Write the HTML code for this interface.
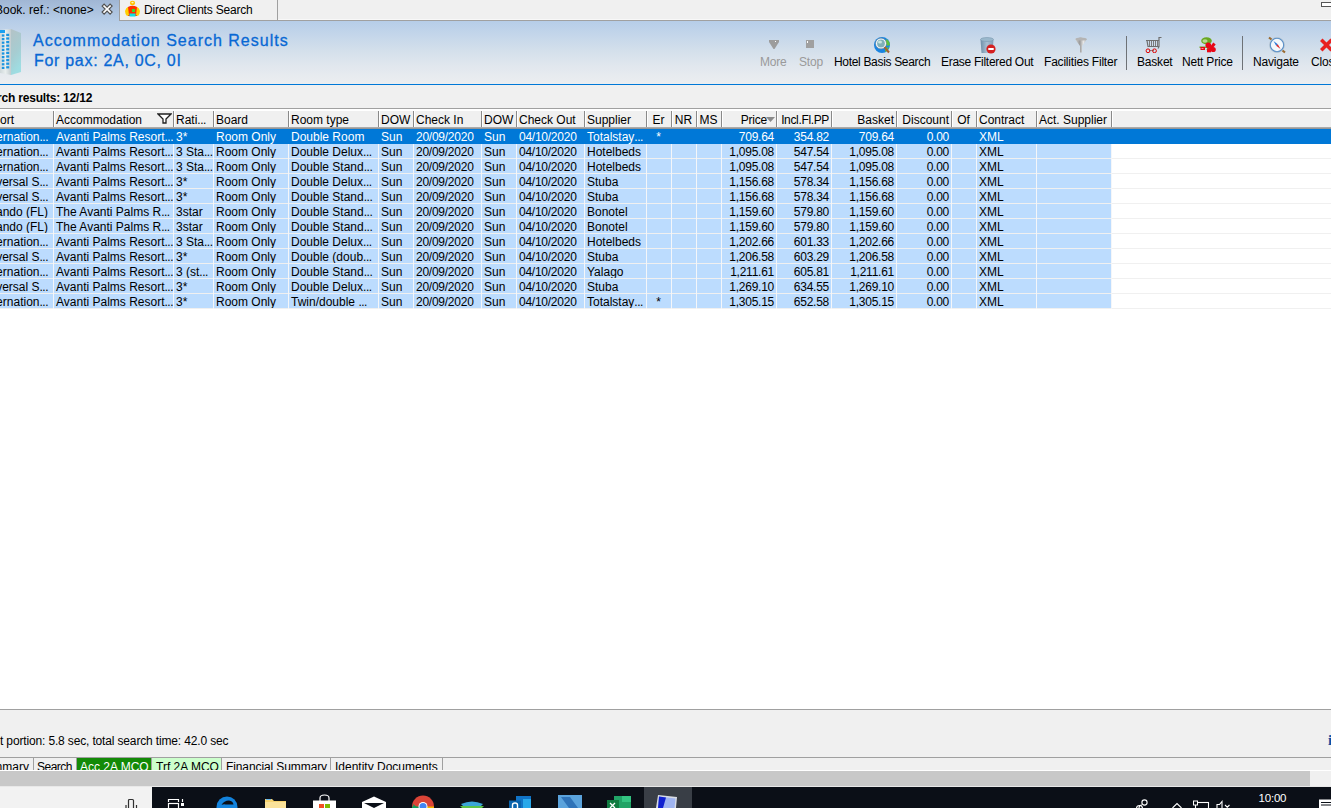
<!DOCTYPE html>
<html><head><meta charset="utf-8">
<style>
*{margin:0;padding:0;box-sizing:border-box}
html,body{width:1331px;height:808px;overflow:hidden;background:#fff}
body{position:relative;font-family:"Liberation Sans",sans-serif;font-size:12px;letter-spacing:-0.2px;color:#000}
.a{position:absolute}
#topbg{position:absolute;left:0;top:0;width:1331px;height:84px;background:linear-gradient(to bottom,#a0b6d4 0px,#b6cde8 21px,#c4d6ea 35px,#d3dfeb 50px,#e1e7ee 66px,#eceef0 84px)}
#tabstrip{position:absolute;left:277px;top:0;width:1054px;height:21px;background:#f0f0f0;border-bottom:1px solid #a0a0a0;border-left:1px solid #a0a0a0}
#tab2{position:absolute;left:119px;top:-1px;width:159px;height:22px;background:#f0f0f0;border:1px solid #a0a0a0}
.t12{position:absolute;white-space:nowrap;font-size:12px;line-height:15px}
#title{position:absolute;left:33px;top:31px;font-size:16px;line-height:19px;letter-spacing:1px;color:#0868d4;-webkit-text-stroke:0.3px #0868d4;white-space:nowrap}
#sub{position:absolute;left:34px;top:51px;font-size:16px;line-height:19px;letter-spacing:0.7px;color:#0868d4;-webkit-text-stroke:0.3px #0868d4;white-space:nowrap}
#blueline{position:absolute;left:0;top:84px;width:1331px;height:1px;background:#0078d7}
#summary{position:absolute;left:0;top:85px;width:1331px;height:23px;background:#f0f0f0}
#gridtop{position:absolute;left:0;top:108px;width:1331px;height:1px;background:#a0a0a0}
#hdr{position:absolute;left:0;top:109px;width:1331px;height:20px;background:#f0f0f0;border-top:2px solid #fff}
#hdrbot{position:absolute;left:0;top:127px;width:1331px;height:2px;background:linear-gradient(#b4b4b4,#8c8c8c)}
.hc{position:absolute;top:0;height:18px}
.hc > span{position:absolute;top:2px;white-space:nowrap;line-height:15px;letter-spacing:0}
.hc > span.l{left:3px}
.hc > span.l0{left:0px}
.hc > span.r{right:2px}
.hc > span.rp{right:9px;letter-spacing:-0.2px}
.hc > span.r3{right:2px;letter-spacing:-0.35px}
.hc > span.c{left:0;right:0;text-align:center}
.hsep{position:absolute;top:0px;width:2px;height:17px;background:linear-gradient(to right,#8a8a8a 50%,#fff 50%)}
.row{position:absolute;left:0;height:15px;width:1111px;background:#bcdcfe}
.row.sel{width:1331px;background:#0078d7;color:#fff}
.cell{position:absolute;top:1px;height:15px;line-height:15px;white-space:nowrap;overflow:hidden;letter-spacing:0}
.cell.num{letter-spacing:-0.25px}
.el{letter-spacing:-0.5px}
.cell.al{text-align:left;padding-left:3px}
.cell.ar{text-align:right;padding-right:2px}
.cell.ac{text-align:center}
.hl{position:absolute;left:0;width:1331px;height:1px;background:#f0f0f0}
.vl{position:absolute;top:0;width:1px;height:165px;background:#f4f6f9}
#status{position:absolute;left:0;top:709px;width:1331px;height:49px;background:#f0f0f0;border-top:1px solid #a0a0a0;border-bottom:1px solid #a0a0a0}
#btabs{position:absolute;left:0;top:758px;width:1331px;height:12px;background:#f0f0f0;overflow:hidden}
.bt{position:absolute;top:0;height:20px;letter-spacing:0;border-right:1px solid #a0a0a0;white-space:nowrap;line-height:15px;padding-top:2px;overflow:hidden}
#hbar{position:absolute;left:0;top:770px;width:1331px;height:17px;background:#f0f0f0;border-top:1px solid #fff}
#hthumb{position:absolute;left:0;top:771px;width:1310px;height:15px;background:#c8c8c8}
#hbot{position:absolute;left:0;top:786px;width:1331px;height:1px;background:#e8e8e8}
#search{position:absolute;left:0;top:787px;width:152px;height:21px;background:#f2f2f2}
#taskbar{position:absolute;left:152px;top:787px;width:1179px;height:21px;background:#0b0f17}
.tbsep{position:absolute;top:36px;width:1px;height:34px;background:#6e7276}
.tl{position:absolute;white-space:nowrap;line-height:15px;text-align:center}
.dis{color:#9a9a9a}
</style></head><body>
<div id="topbg"></div>
<div id="tabstrip"></div>
<div id="tab2"></div>
<div class="a" style="left:278px;top:19px;width:1053px;height:1px;background:#f8f8f8"></div>
<!-- active tab text -->
<div class="t12" style="left:-5px;top:3px;letter-spacing:0">Book. ref.: &lt;none&gt;</div>
<svg class="a" style="left:101px;top:3px" width="12" height="12" viewBox="-0.6 -0.6 12 12">
 <path d="M0.5 2.5 L2.5 0.5 L5.5 3.5 L8.5 0.5 L10.5 2.5 L7.5 5.5 L10.5 8.5 L8.5 10.5 L5.5 7.5 L2.5 10.5 L0.5 8.5 L3.5 5.5Z" fill="#fff" stroke="#505050" stroke-width="1.2" stroke-linejoin="miter"/>
</svg>
<!-- jockey icon -->
<svg class="a" style="left:124px;top:0px" width="17" height="18" viewBox="0 0 17 18">
 <ellipse cx="8.5" cy="3" rx="2.6" ry="2.2" fill="#ffc000"/>
 <ellipse cx="8.5" cy="2.6" rx="1.2" ry="0.8" fill="#fff3c0"/>
 <path d="M4 7 Q8.5 4.5 13 7 L14 11 L13 16 L4 16 L3 11Z" fill="#ff3000"/>
 <path d="M1 11 Q2 7.5 4 7 L5 15 L3 16 Q1 14 1 11Z" fill="#ffd000"/>
 <path d="M16 11 Q15 7.5 13 7 L12 15 L14 16 Q16 14 16 11Z" fill="#ffd000"/>
 <rect x="8" y="9" width="3" height="3" fill="#30e030"/>
 <rect x="5.5" y="13.5" width="6" height="3" fill="#10e0e0"/>
</svg>
<div class="t12" style="left:144px;top:3px">Direct Clients Search</div>
<!-- minimize -->
<div class="a" style="left:1321px;top:2px;width:14px;height:5px;border:1.3px solid #555;background:#fff"></div>

<!-- building icon -->
<svg class="a" style="left:0px;top:28px" width="22" height="48" viewBox="0 0 22 48">
 <defs><linearGradient id="bg1" x1="0" x2="1"><stop offset="0" stop-color="#cfd8da"/><stop offset="0.5" stop-color="#e8eeee"/><stop offset="1" stop-color="#c2cccf"/></linearGradient>
 <linearGradient id="bg2" x1="0" y1="0" x2="0.3" y2="1"><stop offset="0" stop-color="#b4c2c6"/><stop offset="0.6" stop-color="#a6cdd2"/><stop offset="1" stop-color="#9edde2"/></linearGradient></defs>
 <path d="M0 2 L11 1 L11 47 L0 45Z" fill="url(#bg1)"/>
 <path d="M11 1 L21 5 L21 44 L11 47Z" fill="url(#bg2)"/>
 <rect x="0" y="2" width="5" height="3" fill="#1aa0f0"/>
 <g fill="#1a94e0"><rect x="1.8" y="6.4" width="2.6" height="2.2"/><rect x="6.2" y="5.8" width="3" height="2.2"/><rect x="1.8" y="10.0" width="2.6" height="2.2"/><rect x="6.2" y="9.4" width="3" height="2.2"/><rect x="1.8" y="13.6" width="2.6" height="2.2"/><rect x="6.2" y="13.0" width="3" height="2.2"/><rect x="1.8" y="17.2" width="2.6" height="2.2"/><rect x="6.2" y="16.6" width="3" height="2.2"/><rect x="1.8" y="20.8" width="2.6" height="2.2"/><rect x="6.2" y="20.2" width="3" height="2.2"/><rect x="1.8" y="24.4" width="2.6" height="2.2"/><rect x="6.2" y="23.8" width="3" height="2.2"/><rect x="1.8" y="28.0" width="2.6" height="2.2"/><rect x="6.2" y="27.4" width="3" height="2.2"/><rect x="1.8" y="31.6" width="2.6" height="2.2"/><rect x="6.2" y="31.0" width="3" height="2.2"/><rect x="1.8" y="35.2" width="2.6" height="2.2"/><rect x="6.2" y="34.6" width="3" height="2.2"/><rect x="1.8" y="38.8" width="2.6" height="2.2"/><rect x="6.2" y="38.2" width="3" height="2.2"/></g>
</svg>
<div id="title">Accommodation Search Results</div>
<div id="sub">For pax: 2A, 0C, 0I</div>

<!-- toolbar -->
<svg class="a" style="left:769px;top:40px" width="10" height="9" viewBox="0 0 10 9"><path d="M0 0 H10 V2 L5.5 9 H4.5 L0 2Z" fill="#9c9c9c"/><rect x="6" y="1" width="1" height="1" fill="#fff"/></svg>
<div class="t12 dis" style="left:760px;top:55px">More</div>
<div class="a" style="left:806px;top:40px;width:8px;height:8px;background:#a0a0a0"></div><div class="a" style="left:807px;top:41px;width:1px;height:2px;background:#fff"></div>
<div class="t12 dis" style="left:799px;top:55px">Stop</div>
<svg class="a" style="left:873px;top:36px" width="19" height="18" viewBox="0 0 19 18">
 <circle cx="9" cy="9" r="8" fill="#1a84e0"/>
 <path d="M13 3 Q17 5 17 9 L14 10 Q12 7 13 3Z" fill="#5cc040"/>
 <path d="M12 12 L16 11 Q15 15 12 16Z" fill="#5cc040"/>
 <circle cx="8" cy="7.5" r="4.6" fill="#7fb0b8" stroke="#fff" stroke-width="1.4"/>
 <ellipse cx="7" cy="6" rx="2" ry="1.6" fill="#c8e4e0"/>
 <circle cx="8" cy="7.5" r="5.4" fill="none" stroke="#7c8a90" stroke-width="0.6"/>
 <path d="M11.5 11 L16 16.5" stroke="#a86430" stroke-width="2"/>
</svg>
<div class="t12" style="left:834px;top:55px;letter-spacing:-0.32px">Hotel Basis Search</div>
<svg class="a" style="left:979px;top:37px" width="17" height="17" viewBox="0 0 17 17">
 <defs><linearGradient id="tc" x1="0" x2="1"><stop offset="0" stop-color="#6f8fa8"/><stop offset="0.5" stop-color="#a8c0d4"/><stop offset="1" stop-color="#7f9db6"/></linearGradient></defs>
 <path d="M1.5 2.5 L14.5 2.5 L13.5 16 L2.5 16Z" fill="url(#tc)"/>
 <ellipse cx="8" cy="2.5" rx="6.5" ry="2" fill="#9ab8cc" stroke="#7a98b0" stroke-width="0.6"/>
 <circle cx="12" cy="12" r="4.6" fill="#d42020"/>
 <rect x="9.3" y="11" width="5.4" height="2" fill="#fff"/>
</svg>
<div class="t12" style="left:941px;top:55px;letter-spacing:-0.28px">Erase Filtered Out</div>
<svg class="a" style="left:1074px;top:36px" width="14" height="17" viewBox="0 0 14 17">
 <defs><linearGradient id="fn" x1="0" x2="1"><stop offset="0" stop-color="#d8d8d8"/><stop offset="0.4" stop-color="#9a9a9a"/><stop offset="0.7" stop-color="#e8e8e8"/><stop offset="1" stop-color="#a8a8a8"/></linearGradient></defs>
 <path d="M1 3 Q7 0 13 3 L8 10 V16.5 H6 V10Z" fill="url(#fn)"/>
 <ellipse cx="7" cy="3" rx="5.5" ry="1.6" fill="#b4b4b4"/>
</svg>
<div class="t12" style="left:1044px;top:55px">Facilities Filter</div>
<div class="tbsep" style="left:1126px"></div>
<svg class="a" style="left:1145px;top:36px" width="17" height="17" viewBox="0 0 17 17">
 <path d="M1 4.5 H14 M2 4.5 L3 10.5 H14 V1.5 H16.5 M14 10.5 L13 12.5" fill="none" stroke="#6e6e6e" stroke-width="1.2"/>
 <path d="M4.5 5 V10 M6.5 5 V10 M8.5 5 V10 M10.5 5 V10 M12.5 5 V10" stroke="#7a7a7a" stroke-width="1"/>
 <path d="M4 14.5 H9" stroke="#6e6e6e" stroke-width="0.8"/>
 <circle cx="3" cy="14.8" r="1.9" fill="none" stroke="#e00000" stroke-width="1"/>
 <circle cx="9.5" cy="14.8" r="1.9" fill="none" stroke="#e00000" stroke-width="1"/>
</svg>
<div class="t12" style="left:1137px;top:55px">Basket</div>
<svg class="a" style="left:1199px;top:36px" width="18" height="17" viewBox="0 0 18 17">
 <ellipse cx="7.5" cy="4.8" rx="5.3" ry="3.6" fill="#6aa820"/>
 <ellipse cx="6" cy="5" rx="2.6" ry="1.8" fill="#b8d890"/>
 <rect x="0.5" y="10.5" width="8" height="1.4" fill="#6aa820"/>
 <circle cx="9.5" cy="13.5" r="1.8" fill="#6aa820"/>
 <circle cx="9.3" cy="9.3" r="2.8" fill="#e80818"/>
 <path d="M15.5 7.5 L10 14.5" stroke="#e80818" stroke-width="3"/>
 <circle cx="14.2" cy="13.5" r="2.6" fill="#e80818"/>
 <rect x="8" y="12.5" width="4" height="3.8" fill="#e80818"/>
 <rect x="1.5" y="11" width="4.5" height="3" fill="#e80818"/>
 <rect x="2.5" y="12" width="2" height="1" fill="#ff9090"/>
</svg>
<div class="t12" style="left:1182px;top:55px">Nett Price</div>
<div class="tbsep" style="left:1242px"></div>
<svg class="a" style="left:1268px;top:36px" width="18" height="18" viewBox="0 0 18 18">
 <circle cx="9" cy="9" r="6.8" fill="#f4f8fc" stroke="#5a90c8" stroke-width="1.3"/>
 <circle cx="9" cy="9" r="7.6" fill="none" stroke="#b8c4cc" stroke-width="0.6"/>
 <path d="M5.5 5 L9.8 8.2 L8.2 9.8Z" fill="#2a78d8"/>
 <path d="M12.5 13 L9.8 8.2 L8.2 9.8Z" fill="#e02828"/>
 <path d="M1 1.5 L3.5 3.5" stroke="#9a6a30" stroke-width="2.2"/>
 <path d="M14.5 14.5 L17 16.5" stroke="#9a6a30" stroke-width="2.2"/>
</svg>
<div class="t12" style="left:1253px;top:55px">Navigate</div>
<svg class="a" style="left:1319px;top:37px" width="14" height="16" viewBox="0 0 14 16">
 <path d="M1 4 L3.5 1.5 L7.5 5.5 L11.5 1.5 L14 4 L10 8 L14 12 L11.5 14.5 L7.5 10.5 L3.5 14.5 L1 12 L5 8Z" fill="#e82020"/>
</svg>
<div class="t12" style="left:1311px;top:55px">Close</div>

<div id="blueline"></div>
<div id="summary"></div>
<div class="t12" style="left:-3px;top:91px;font-weight:bold">rch results: 12/12</div>
<div id="gridtop"></div>
<div id="hdr">
<div class="hc" style="left:0px;width:53px"><span class="l0">ort</span></div>
<div class="hc" style="left:53px;width:120px"><span class="l">Accommodation</span></div>
<div class="hc" style="left:173px;width:40px"><span class="l">Rati<span class="el">...</span></span></div>
<div class="hc" style="left:213px;width:75px"><span class="l">Board</span></div>
<div class="hc" style="left:288px;width:90px"><span class="l">Room type</span></div>
<div class="hc" style="left:378px;width:35px"><span class="l">DOW</span></div>
<div class="hc" style="left:413px;width:68px"><span class="l">Check In</span></div>
<div class="hc" style="left:481px;width:35px"><span class="l">DOW</span></div>
<div class="hc" style="left:516px;width:68px"><span class="l">Check Out</span></div>
<div class="hc" style="left:584px;width:62px"><span class="l">Supplier</span></div>
<div class="hc" style="left:646px;width:25px"><span class="c">Er</span></div>
<div class="hc" style="left:671px;width:25px"><span class="c">NR</span></div>
<div class="hc" style="left:696px;width:25px"><span class="c">MS</span></div>
<div class="hc" style="left:721px;width:55px"><span class="rp">Price</span></div>
<div class="hc" style="left:776px;width:55px"><span class="r3">Incl.Fl.PP</span></div>
<div class="hc" style="left:831px;width:65px"><span class="r">Basket</span></div>
<div class="hc" style="left:896px;width:55px"><span class="r">Discount</span></div>
<div class="hc" style="left:951px;width:25px"><span class="c">Of</span></div>
<div class="hc" style="left:976px;width:60px"><span class="l">Contract</span></div>
<div class="hc" style="left:1036px;width:75px"><span class="l">Act. Supplier</span></div>
<div class="hsep" style="left:53px"></div>
<div class="hsep" style="left:173px"></div>
<div class="hsep" style="left:213px"></div>
<div class="hsep" style="left:288px"></div>
<div class="hsep" style="left:378px"></div>
<div class="hsep" style="left:413px"></div>
<div class="hsep" style="left:481px"></div>
<div class="hsep" style="left:516px"></div>
<div class="hsep" style="left:584px"></div>
<div class="hsep" style="left:646px"></div>
<div class="hsep" style="left:671px"></div>
<div class="hsep" style="left:696px"></div>
<div class="hsep" style="left:721px"></div>
<div class="hsep" style="left:776px"></div>
<div class="hsep" style="left:831px"></div>
<div class="hsep" style="left:896px"></div>
<div class="hsep" style="left:951px"></div>
<div class="hsep" style="left:976px"></div>
<div class="hsep" style="left:1036px"></div>
<div class="hsep" style="left:1111px"></div>
<svg class="a" style="left:157px;top:2px" width="15" height="11" viewBox="0 0 15 11"><path d="M1 1 H14 L9 6 V10 H6 V6Z" fill="#fff" stroke="#202020" stroke-width="1.3" stroke-linejoin="miter"/></svg>
<svg class="a" style="left:766px;top:6px" width="9" height="5" viewBox="0 0 9 5"><path d="M0 0 H9 L4.5 5Z" fill="#8a8a8a"/></svg>
</div>
<div id="hdrbot"></div>
<div class="row sel" style="top:129px"><div class="cell ar" style="left:-100px;width:153px;padding-right:5px">ernation<span class="el">...</span></div><div class="cell al" style="left:53px;width:120px">Avanti Palms Resort<span class="el">...</span></div><div class="cell al" style="left:173px;width:40px">3*</div><div class="cell al" style="left:213px;width:75px">Room Only</div><div class="cell al" style="left:288px;width:90px">Double Room</div><div class="cell al" style="left:378px;width:35px">Sun</div><div class="cell al num" style="left:413px;width:68px">20/09/2020</div><div class="cell al" style="left:481px;width:35px">Sun</div><div class="cell al num" style="left:516px;width:68px">04/10/2020</div><div class="cell al" style="left:584px;width:62px">Totalstay<span class="el">...</span></div><div class="cell ac" style="left:646px;width:25px">*</div><div class="cell ar num" style="left:721px;width:55px">709.64</div><div class="cell ar num" style="left:776px;width:55px">354.82</div><div class="cell ar num" style="left:831px;width:65px">709.64</div><div class="cell ar num" style="left:896px;width:55px">0.00</div><div class="cell al" style="left:976px;width:60px">XML</div></div>
<div class="row" style="top:144px"><div class="cell ar" style="left:-100px;width:153px;padding-right:5px">ernation<span class="el">...</span></div><div class="cell al" style="left:53px;width:120px">Avanti Palms Resort<span class="el">...</span></div><div class="cell al" style="left:173px;width:40px">3 Sta<span class="el">...</span></div><div class="cell al" style="left:213px;width:75px">Room Only</div><div class="cell al" style="left:288px;width:90px">Double Delux<span class="el">...</span></div><div class="cell al" style="left:378px;width:35px">Sun</div><div class="cell al num" style="left:413px;width:68px">20/09/2020</div><div class="cell al" style="left:481px;width:35px">Sun</div><div class="cell al num" style="left:516px;width:68px">04/10/2020</div><div class="cell al" style="left:584px;width:62px">Hotelbeds</div><div class="cell ar num" style="left:721px;width:55px">1,095.08</div><div class="cell ar num" style="left:776px;width:55px">547.54</div><div class="cell ar num" style="left:831px;width:65px">1,095.08</div><div class="cell ar num" style="left:896px;width:55px">0.00</div><div class="cell al" style="left:976px;width:60px">XML</div></div>
<div class="row" style="top:159px"><div class="cell ar" style="left:-100px;width:153px;padding-right:5px">ernation<span class="el">...</span></div><div class="cell al" style="left:53px;width:120px">Avanti Palms Resort<span class="el">...</span></div><div class="cell al" style="left:173px;width:40px">3 Sta<span class="el">...</span></div><div class="cell al" style="left:213px;width:75px">Room Only</div><div class="cell al" style="left:288px;width:90px">Double Stand<span class="el">...</span></div><div class="cell al" style="left:378px;width:35px">Sun</div><div class="cell al num" style="left:413px;width:68px">20/09/2020</div><div class="cell al" style="left:481px;width:35px">Sun</div><div class="cell al num" style="left:516px;width:68px">04/10/2020</div><div class="cell al" style="left:584px;width:62px">Hotelbeds</div><div class="cell ar num" style="left:721px;width:55px">1,095.08</div><div class="cell ar num" style="left:776px;width:55px">547.54</div><div class="cell ar num" style="left:831px;width:65px">1,095.08</div><div class="cell ar num" style="left:896px;width:55px">0.00</div><div class="cell al" style="left:976px;width:60px">XML</div></div>
<div class="row" style="top:174px"><div class="cell ar" style="left:-100px;width:153px;padding-right:5px">versal S<span class="el">...</span></div><div class="cell al" style="left:53px;width:120px">Avanti Palms Resort<span class="el">...</span></div><div class="cell al" style="left:173px;width:40px">3*</div><div class="cell al" style="left:213px;width:75px">Room Only</div><div class="cell al" style="left:288px;width:90px">Double Delux<span class="el">...</span></div><div class="cell al" style="left:378px;width:35px">Sun</div><div class="cell al num" style="left:413px;width:68px">20/09/2020</div><div class="cell al" style="left:481px;width:35px">Sun</div><div class="cell al num" style="left:516px;width:68px">04/10/2020</div><div class="cell al" style="left:584px;width:62px">Stuba</div><div class="cell ar num" style="left:721px;width:55px">1,156.68</div><div class="cell ar num" style="left:776px;width:55px">578.34</div><div class="cell ar num" style="left:831px;width:65px">1,156.68</div><div class="cell ar num" style="left:896px;width:55px">0.00</div><div class="cell al" style="left:976px;width:60px">XML</div></div>
<div class="row" style="top:189px"><div class="cell ar" style="left:-100px;width:153px;padding-right:5px">versal S<span class="el">...</span></div><div class="cell al" style="left:53px;width:120px">Avanti Palms Resort<span class="el">...</span></div><div class="cell al" style="left:173px;width:40px">3*</div><div class="cell al" style="left:213px;width:75px">Room Only</div><div class="cell al" style="left:288px;width:90px">Double Stand<span class="el">...</span></div><div class="cell al" style="left:378px;width:35px">Sun</div><div class="cell al num" style="left:413px;width:68px">20/09/2020</div><div class="cell al" style="left:481px;width:35px">Sun</div><div class="cell al num" style="left:516px;width:68px">04/10/2020</div><div class="cell al" style="left:584px;width:62px">Stuba</div><div class="cell ar num" style="left:721px;width:55px">1,156.68</div><div class="cell ar num" style="left:776px;width:55px">578.34</div><div class="cell ar num" style="left:831px;width:65px">1,156.68</div><div class="cell ar num" style="left:896px;width:55px">0.00</div><div class="cell al" style="left:976px;width:60px">XML</div></div>
<div class="row" style="top:204px"><div class="cell ar" style="left:-100px;width:153px;padding-right:5px">ando (FL)</div><div class="cell al" style="left:53px;width:120px">The Avanti Palms R<span class="el">...</span></div><div class="cell al" style="left:173px;width:40px">3star</div><div class="cell al" style="left:213px;width:75px">Room Only</div><div class="cell al" style="left:288px;width:90px">Double Stand<span class="el">...</span></div><div class="cell al" style="left:378px;width:35px">Sun</div><div class="cell al num" style="left:413px;width:68px">20/09/2020</div><div class="cell al" style="left:481px;width:35px">Sun</div><div class="cell al num" style="left:516px;width:68px">04/10/2020</div><div class="cell al" style="left:584px;width:62px">Bonotel</div><div class="cell ar num" style="left:721px;width:55px">1,159.60</div><div class="cell ar num" style="left:776px;width:55px">579.80</div><div class="cell ar num" style="left:831px;width:65px">1,159.60</div><div class="cell ar num" style="left:896px;width:55px">0.00</div><div class="cell al" style="left:976px;width:60px">XML</div></div>
<div class="row" style="top:219px"><div class="cell ar" style="left:-100px;width:153px;padding-right:5px">ando (FL)</div><div class="cell al" style="left:53px;width:120px">The Avanti Palms R<span class="el">...</span></div><div class="cell al" style="left:173px;width:40px">3star</div><div class="cell al" style="left:213px;width:75px">Room Only</div><div class="cell al" style="left:288px;width:90px">Double Stand<span class="el">...</span></div><div class="cell al" style="left:378px;width:35px">Sun</div><div class="cell al num" style="left:413px;width:68px">20/09/2020</div><div class="cell al" style="left:481px;width:35px">Sun</div><div class="cell al num" style="left:516px;width:68px">04/10/2020</div><div class="cell al" style="left:584px;width:62px">Bonotel</div><div class="cell ar num" style="left:721px;width:55px">1,159.60</div><div class="cell ar num" style="left:776px;width:55px">579.80</div><div class="cell ar num" style="left:831px;width:65px">1,159.60</div><div class="cell ar num" style="left:896px;width:55px">0.00</div><div class="cell al" style="left:976px;width:60px">XML</div></div>
<div class="row" style="top:234px"><div class="cell ar" style="left:-100px;width:153px;padding-right:5px">ernation<span class="el">...</span></div><div class="cell al" style="left:53px;width:120px">Avanti Palms Resort<span class="el">...</span></div><div class="cell al" style="left:173px;width:40px">3 Sta<span class="el">...</span></div><div class="cell al" style="left:213px;width:75px">Room Only</div><div class="cell al" style="left:288px;width:90px">Double Delux<span class="el">...</span></div><div class="cell al" style="left:378px;width:35px">Sun</div><div class="cell al num" style="left:413px;width:68px">20/09/2020</div><div class="cell al" style="left:481px;width:35px">Sun</div><div class="cell al num" style="left:516px;width:68px">04/10/2020</div><div class="cell al" style="left:584px;width:62px">Hotelbeds</div><div class="cell ar num" style="left:721px;width:55px">1,202.66</div><div class="cell ar num" style="left:776px;width:55px">601.33</div><div class="cell ar num" style="left:831px;width:65px">1,202.66</div><div class="cell ar num" style="left:896px;width:55px">0.00</div><div class="cell al" style="left:976px;width:60px">XML</div></div>
<div class="row" style="top:249px"><div class="cell ar" style="left:-100px;width:153px;padding-right:5px">versal S<span class="el">...</span></div><div class="cell al" style="left:53px;width:120px">Avanti Palms Resort<span class="el">...</span></div><div class="cell al" style="left:173px;width:40px">3*</div><div class="cell al" style="left:213px;width:75px">Room Only</div><div class="cell al" style="left:288px;width:90px">Double (doub<span class="el">...</span></div><div class="cell al" style="left:378px;width:35px">Sun</div><div class="cell al num" style="left:413px;width:68px">20/09/2020</div><div class="cell al" style="left:481px;width:35px">Sun</div><div class="cell al num" style="left:516px;width:68px">04/10/2020</div><div class="cell al" style="left:584px;width:62px">Stuba</div><div class="cell ar num" style="left:721px;width:55px">1,206.58</div><div class="cell ar num" style="left:776px;width:55px">603.29</div><div class="cell ar num" style="left:831px;width:65px">1,206.58</div><div class="cell ar num" style="left:896px;width:55px">0.00</div><div class="cell al" style="left:976px;width:60px">XML</div></div>
<div class="row" style="top:264px"><div class="cell ar" style="left:-100px;width:153px;padding-right:5px">ernation<span class="el">...</span></div><div class="cell al" style="left:53px;width:120px">Avanti Palms Resort<span class="el">...</span></div><div class="cell al" style="left:173px;width:40px">3 (st<span class="el">...</span></div><div class="cell al" style="left:213px;width:75px">Room Only</div><div class="cell al" style="left:288px;width:90px">Double Stand<span class="el">...</span></div><div class="cell al" style="left:378px;width:35px">Sun</div><div class="cell al num" style="left:413px;width:68px">20/09/2020</div><div class="cell al" style="left:481px;width:35px">Sun</div><div class="cell al num" style="left:516px;width:68px">04/10/2020</div><div class="cell al" style="left:584px;width:62px">Yalago</div><div class="cell ar num" style="left:721px;width:55px">1,211.61</div><div class="cell ar num" style="left:776px;width:55px">605.81</div><div class="cell ar num" style="left:831px;width:65px">1,211.61</div><div class="cell ar num" style="left:896px;width:55px">0.00</div><div class="cell al" style="left:976px;width:60px">XML</div></div>
<div class="row" style="top:279px"><div class="cell ar" style="left:-100px;width:153px;padding-right:5px">versal S<span class="el">...</span></div><div class="cell al" style="left:53px;width:120px">Avanti Palms Resort<span class="el">...</span></div><div class="cell al" style="left:173px;width:40px">3*</div><div class="cell al" style="left:213px;width:75px">Room Only</div><div class="cell al" style="left:288px;width:90px">Double Delux<span class="el">...</span></div><div class="cell al" style="left:378px;width:35px">Sun</div><div class="cell al num" style="left:413px;width:68px">20/09/2020</div><div class="cell al" style="left:481px;width:35px">Sun</div><div class="cell al num" style="left:516px;width:68px">04/10/2020</div><div class="cell al" style="left:584px;width:62px">Stuba</div><div class="cell ar num" style="left:721px;width:55px">1,269.10</div><div class="cell ar num" style="left:776px;width:55px">634.55</div><div class="cell ar num" style="left:831px;width:65px">1,269.10</div><div class="cell ar num" style="left:896px;width:55px">0.00</div><div class="cell al" style="left:976px;width:60px">XML</div></div>
<div class="row" style="top:294px"><div class="cell ar" style="left:-100px;width:153px;padding-right:5px">ernation<span class="el">...</span></div><div class="cell al" style="left:53px;width:120px">Avanti Palms Resort<span class="el">...</span></div><div class="cell al" style="left:173px;width:40px">3*</div><div class="cell al" style="left:213px;width:75px">Room Only</div><div class="cell al" style="left:288px;width:90px">Twin/double <span class="el">...</span></div><div class="cell al" style="left:378px;width:35px">Sun</div><div class="cell al num" style="left:413px;width:68px">20/09/2020</div><div class="cell al" style="left:481px;width:35px">Sun</div><div class="cell al num" style="left:516px;width:68px">04/10/2020</div><div class="cell al" style="left:584px;width:62px">Totalstay<span class="el">...</span></div><div class="cell ac" style="left:646px;width:25px">*</div><div class="cell ar num" style="left:721px;width:55px">1,305.15</div><div class="cell ar num" style="left:776px;width:55px">652.58</div><div class="cell ar num" style="left:831px;width:65px">1,305.15</div><div class="cell ar num" style="left:896px;width:55px">0.00</div><div class="cell al" style="left:976px;width:60px">XML</div></div>
<!-- row gridlines -->
<div class="hl" style="top:158px"></div>
<div class="hl" style="top:173px"></div>
<div class="hl" style="top:188px"></div>
<div class="hl" style="top:203px"></div>
<div class="hl" style="top:218px"></div>
<div class="hl" style="top:233px"></div>
<div class="hl" style="top:248px"></div>
<div class="hl" style="top:263px"></div>
<div class="hl" style="top:278px"></div>
<div class="hl" style="top:293px"></div>
<div class="hl" style="top:308px"></div>
<div class="a" style="left:0;top:144px;width:1111px;height:165px"><div class="vl" style="left:53px"></div><div class="vl" style="left:173px"></div><div class="vl" style="left:213px"></div><div class="vl" style="left:288px"></div><div class="vl" style="left:378px"></div><div class="vl" style="left:413px"></div><div class="vl" style="left:481px"></div><div class="vl" style="left:516px"></div><div class="vl" style="left:584px"></div><div class="vl" style="left:646px"></div><div class="vl" style="left:671px"></div><div class="vl" style="left:696px"></div><div class="vl" style="left:721px"></div><div class="vl" style="left:776px"></div><div class="vl" style="left:831px"></div><div class="vl" style="left:896px"></div><div class="vl" style="left:951px"></div><div class="vl" style="left:976px"></div><div class="vl" style="left:1036px"></div><div class="vl" style="left:1111px"></div></div>


<div id="status"></div>
<div class="t12" style="left:0px;top:734px;letter-spacing:-0.15px">t portion: 5.8 sec, total search time: 42.0 sec</div>
<div class="a" style="left:1328px;top:733px;color:#0d4f9e;font-family:'Liberation Serif',serif;font-weight:bold;font-size:15px;line-height:15px">i</div>
<div id="btabs">
 <div class="bt" style="left:-40px;width:74px;padding-right:4px;text-align:right">Summary</div>
 <div class="bt" style="left:33px;width:44px;padding-left:4px;letter-spacing:-0.5px">Search</div>
 <div class="bt" style="left:77px;width:75px;padding-left:3px;background:#138a07;color:#fff">Acc 2A MCO</div>
 <div class="bt" style="left:152px;width:70px;padding-left:4px;background:#ccffcc">Trf 2A MCO</div>
 <div class="bt" style="left:222px;width:109px;padding-left:4px;letter-spacing:-0.1px">Financial Summary</div>
 <div class="bt" style="left:331px;width:112px;padding-left:4px">Identity Documents</div>
</div>
<div id="hbar"></div>
<div id="hthumb"></div>
<div id="hbot"></div>
<div id="search"></div>
<svg class="a" style="left:124px;top:797px" width="15" height="11" viewBox="0 0 15 11"><path d="M4.5 11 V3.5 Q4.5 2.5 5.5 2.5 H8.5 Q9.5 2.5 9.5 3.5 V11 M2 11 V8 M12.5 11 V8" fill="none" stroke="#303030" stroke-width="1.2"/></svg>
<div id="taskbar"></div>
<svg class="a" style="left:0;top:787px" width="1331" height="21" viewBox="0 787 1331 21">
 <!-- task view -->
 <g fill="none" stroke="#fff" stroke-width="1.2">
  <path d="M168.5 802 V799.5 H178.5 V802"/>
  <rect x="168.5" y="803.5" width="10" height="8"/>
  <path d="M182.5 799 V802"/>
 </g>
 <rect x="181" y="803" width="3" height="3" fill="#fff"/>
 <!-- edge -->
 <circle cx="227" cy="807" r="10.5" fill="#1383dd"/>
 <path d="M221.5 805 Q224 800.5 229 800.5 Q233 801 233.5 804.5 H225.5 Q223.5 804 221.5 805Z" fill="#0b0f17"/>
 <!-- folder -->
 <path d="M265 799 H272 L274 801 H286 V808 H265Z" fill="#f6d26e"/>
 <rect x="265" y="802" width="21" height="6" fill="#fbe29a"/>
 <rect x="266" y="799" width="5" height="1" fill="#6bb7e8"/>
 <!-- store -->
 <path d="M320 801 V798 Q320 795 324.5 795 Q329 795 329 798 V801" fill="none" stroke="#fff" stroke-width="1.2"/>
 <rect x="313" y="800.5" width="23" height="8" fill="#fff"/>
 <rect x="319" y="804" width="5" height="4" fill="#f25022"/>
 <rect x="325" y="804" width="5" height="4" fill="#7fba00"/>
 <!-- mail -->
 <path d="M362 802 L374 796.5 L386 802 V808 H362Z" fill="#fff"/>
 <path d="M364 803 H384 L374 808Z" fill="#0b0f17"/>
 <!-- chrome -->
 <circle cx="423" cy="806.5" r="11" fill="#db4437"/>
 <path d="M412 806.5 A11 11 0 0 0 423 817.5 L423 806.5Z" fill="#0f9d58"/>
 <path d="M434 806.5 A11 11 0 0 1 428 816 L423 806.5Z" fill="#f4b400"/>
 <path d="M413 804 L418 808 L414 810Z" fill="#0f9d58"/>
 <circle cx="423" cy="806.5" r="4.5" fill="#fff"/>
 <circle cx="423" cy="806.5" r="3.5" fill="#4285f4"/>
 <!-- teal app -->
 <path d="M461 804 Q472 799 483 804 L481 806 H463Z" fill="#3ba6d8"/>
 <path d="M460 806 H484 L482 808 H462Z" fill="#5cc24a"/>
 <!-- outlook -->
 <rect x="516" y="796" width="15" height="12" fill="#1173c6"/>
 <rect x="523" y="799" width="8" height="9" fill="#28a8ea"/>
 <rect x="509" y="800.5" width="12" height="8" fill="#0a64ad"/>
 <path d="M512.5 808 V805 Q512.5 803 515 803 Q517.5 803 517.5 805 V808" fill="none" stroke="#fff" stroke-width="1.4"/>
 <!-- blue app -->
 <rect x="558" y="795" width="24" height="13" fill="#5ba3dc"/>
 <path d="M561 797 H570 L578 808 H569Z" fill="#2f73b8"/>
 <!-- excel -->
 <rect x="614" y="796" width="17" height="12" fill="#21a366"/>
 <rect x="622" y="796" width="9" height="6" fill="#33c481"/>
 <rect x="607" y="800" width="12" height="8" fill="#107c41"/>
 <path d="M610 803 L615 808 M615 803 L610 808" stroke="#fff" stroke-width="1.3"/>
 <!-- active app -->
 <rect x="644" y="787" width="48" height="21" fill="#393e46"/>
 <path d="M658 795 L677 797 L676 808 H656Z" fill="#d8dce4"/>
 <path d="M659 796.5 L675.5 798.5 L674.5 808 H658Z" fill="#9fb4f0"/>
 <path d="M659 796.5 L666 797.5 L663 808 H658Z" fill="#1020d0"/>
 <!-- tray -->
 <g fill="none" stroke="#fff" stroke-width="1.1">
  <circle cx="1144.5" cy="802.5" r="2.6"/>
  <path d="M1139 808 Q1139 805 1142 805"/>
  <circle cx="1139.5" cy="808.5" r="3"/>
  <path d="M1172.5 808 L1177 803.5 L1181.5 808"/>
  <rect x="1195.5" y="802.5" width="13" height="8"/>
  <path d="M1217 808 V804.5 H1219.5 L1222 801.5 V808"/>
  <path d="M1225 805 L1229.5 809.5 M1229.5 805 L1225 809.5"/>
 </g>
 <rect x="1193.5" y="801" width="4" height="4" fill="#0b0f17" stroke="#fff" stroke-width="1"/>
 <text x="1258.5" y="802" fill="#fff" font-family="Liberation Sans" font-size="11.5" letter-spacing="-0.2">10:00</text>
 <rect x="1319" y="799.5" width="14" height="10" fill="#fff"/>
 <path d="M1321 802.5 H1331 M1321 805 H1331" stroke="#0b0f17" stroke-width="1"/>
</svg>
</body></html>
